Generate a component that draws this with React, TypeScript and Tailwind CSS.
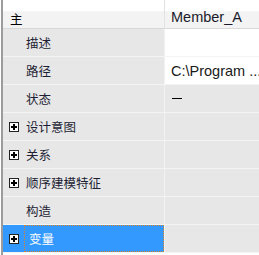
import React from "react";

type Row = {
    label: string;
    value?: string;
    plus?: boolean;
    white?: boolean;
    selected?: boolean;
};

const rows: Row[] = [
    {label: "描述", white: true},
    {label: "路径", value: "C:\\Program ...", white: true},
    {label: "状态", value: "—"},
    {label: "设计意图", plus: true},
    {label: "关系", plus: true},
    {label: "顺序建模特征", plus: true},
    {label: "构造"},
    {label: "变量", plus: true, selected: true},
];

const cjk = "font-['Microsoft_YaHei','Noto_Sans_CJK_SC',sans-serif]";

function PlusBox() {
    return (
        <div className="relative w-[10px] h-[10px] border border-[#222] bg-white">
            <div className="absolute left-[1px] top-[3px] w-[6px] h-[2px] bg-black"/>
            <div className="absolute left-[3px] top-[1px] w-[2px] h-[6px] bg-black"/>
        </div>
    );
}

export default function App() {
    return (
        <div className="w-[259px] h-[255px] bg-white pl-[1px] overflow-hidden">

            <div className="h-full border-l-2 border-[#9c9c9c] flex flex-col">

                {/* HEADER */}
                <div className="grid grid-cols-[162px_1fr] h-[29px] border-b border-[#d8d8d8] bg-[linear-gradient(to_bottom,#ffffff_0%,#ffffff_38%,#f3f3f3_42%,#f3f3f3_100%)]">
                    <div className={`${cjk} text-[12.5px] text-black pl-[7px] pt-[10px] border-r border-[#e2e2e2]`}>
                        主
                    </div>
                    <div className="font-['Liberation_Sans',Arial,sans-serif] text-[14.5px] text-[#1a1a2a] pl-[6px] pt-[7px] whitespace-nowrap">
                        Member_A
                    </div>
                </div>

                {/* ROWS */}
                {rows.map((r) => (
                    <div key={r.label} className="grid grid-cols-[162px_1fr] h-[28px] border-b border-[#f4f4f4]">

                        <div className={`flex items-center border-r border-[#f2f2f2] ${r.selected ? "bg-[#3399ff]" : "bg-[#e7e7e7]"}`}>
                            <div className="w-[21px] pl-[6px] flex items-center">
                                {r.plus && <PlusBox/>}
                            </div>
                            <div className={`flex-1 h-full flex items-center border border-dotted pt-[2px] ${cjk} text-[12.5px] ${r.selected ? "pl-[4px] text-white border-[#d9822b]" : "pl-[1px] text-[#1e1e34] border-transparent"}`}>
                                {r.label}
                            </div>
                        </div>

                        <div className={`flex items-center pl-[6px] whitespace-nowrap overflow-hidden ${r.white ? "bg-white" : "bg-[#e7e7e7]"}`}>
                            {r.value === "—" ? (
                                <div className="w-[10px] h-[1.5px] bg-black ml-[1px]"/>
                            ) : (
                                <span className="pt-[2px] font-['Liberation_Sans',Arial,sans-serif] text-[14.5px] text-[#1a1a1a]">
                                    {r.value}
                                </span>
                            )}
                        </div>

                    </div>
                ))}

            </div>

        </div>
    );
}
